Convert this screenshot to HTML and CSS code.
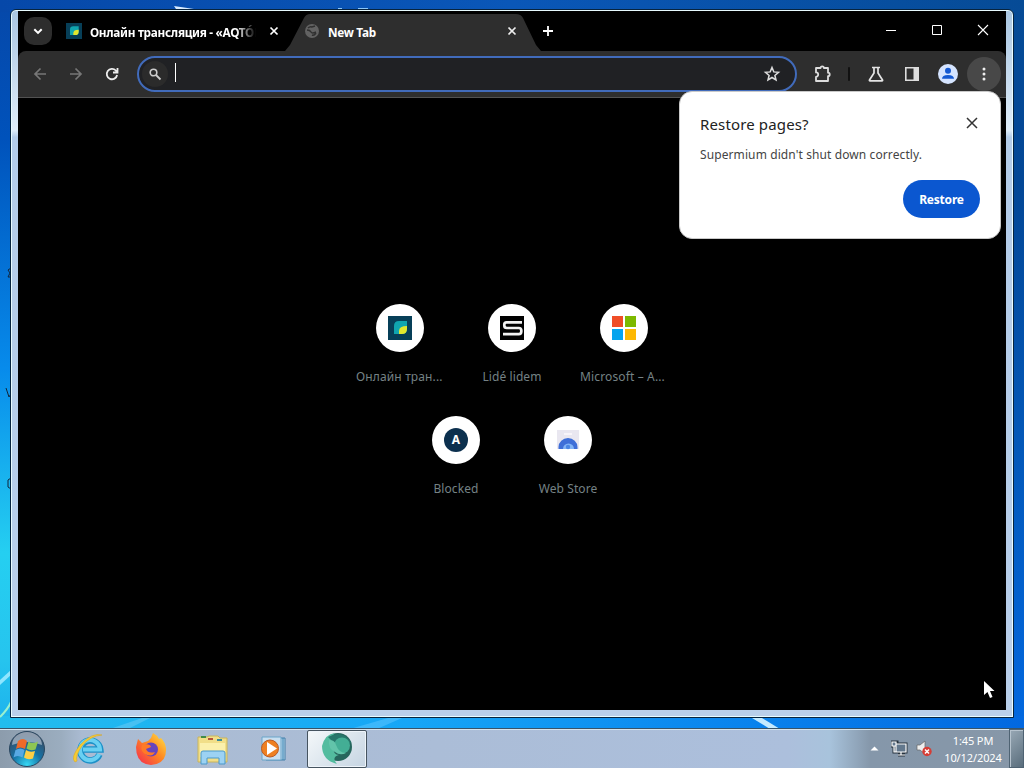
FILE: index.html
```html
<!DOCTYPE html>
<html lang="en">
<head>
<meta charset="utf-8">
<title>New Tab</title>
<link rel="stylesheet" href="styles.css">
</head>
<body>
<div class="desktop">
  <svg class="wallpaper" width="1024" height="768" viewBox="0 0 1024 768">
    <path d="M174 6l20 3 14 3h-30z" fill="#d9ecff"/>
    <path d="M338 8h4v3h-4zM358 8h10v3h-10z" fill="#8cc8fa"/>
    <path d="M0 680L12 669v5L0 685z" fill="#8fe6ff"/>
    <path d="M0 717q8-8 11-15" stroke="#9af0cf" stroke-width="2" fill="none"/>
    <path d="M110 729l32-11h8l-22 11z" fill="#62c8f4" opacity=".6"/>
    <path d="M350 729l38-11h14l-25 11z" fill="#62c8ff" opacity=".5"/>
    <path d="M752 718h10l18 11h-10z" fill="#c4eaff"/>
    <path d="M11 268l-3 2 2 3-2 4h3M6 388l3 9 3-5M11 478l-3 2v7l3 2" fill="none" stroke="#10253a"/>
  </svg>

  <main class="window">
    <header class="tabstrip">
      <button class="tab-search" aria-label="Search tabs"><svg width="12" height="12" viewBox="0 0 12 12"><path d="M2.3 4.200L6 7.900l3.700-3.700" fill="none" stroke="#fff" stroke-width="2"/></svg></button>
      <div class="tab">
        <svg class="favicon" width="16" height="16" viewBox="0 0 24 24"><path fill="#073f58" d="M0 0h24v24H0z"/><path fill="#10a5af" d="M6 10q0-5 5-5h8v8q0 5-5 5H6z"/><path fill="#e2e72d" d="M11 15q0-5 8-5v3q0 5-5 5h-3z"/></svg>
        <span class="tab-title fade">Онлайн трансляция - «AQTÓB</span>
        <svg class="tab-close" width="14" height="14" viewBox="0 0 14 14"><path d="M3.500 3.500l7 7m0-7l-7 7" stroke="#fff" stroke-width="1.700"/></svg>
      </div>
      <div class="tab active">
        <svg class="tab-shape" width="256" height="37" viewBox="0 0 256 37"><path d="M0 37L5 31 19 4q2-4 6-4h206q5 0 7 4l13 27 5 6z" fill="#2e2e2e"/></svg>
        <svg class="favicon" width="16" height="16" viewBox="0 0 16 16"><circle cx="8" cy="8" r="7" fill="#626262"/><path d="M4 5q2-2 4-1l3-1M3 7q3 0 4 2t5 0M8 12q2 1 4-2" fill="none" stroke="#303030" stroke-width="1.500"/></svg>
        <span class="tab-title">New Tab</span>
        <svg class="tab-close" width="14" height="14" viewBox="0 0 14 14"><path d="M3.500 3.500l7 7m0-7l-7 7" stroke="#eee" stroke-width="1.700"/></svg>
      </div>
      <svg class="new-tab" width="14" height="14" viewBox="0 0 14 14"><path d="M7 2v10M2 7h10" stroke="#fff" stroke-width="1.800"/></svg>
      <div class="controls">
        <span><svg width="12" height="12" viewBox="0 0 12 12"><path d="M1 6.500h10" stroke="#fff"/></svg></span>
        <span><svg width="12" height="12" viewBox="0 0 12 12"><path d="M1.500 1.500h9v9h-9z" fill="none" stroke="#fff"/></svg></span>
        <span><svg width="12" height="12" viewBox="0 0 12 12"><path d="M1 1l10 10M11 1L1 11" stroke="#fff" stroke-width="1.100"/></svg></span>
      </div>
    </header>

    <nav class="toolbar">
      <span class="tool"><svg width="16" height="16" viewBox="0 0 16 16"><path d="M14 8H3m5.500-5.500L3 8l5.500 5.500" fill="none" stroke="#777" stroke-width="1.700"/></svg></span>
      <span class="tool"><svg width="16" height="16" viewBox="0 0 16 16"><path d="M2 8h11M7.500 2.500L13 8l-5.500 5.500" fill="none" stroke="#777" stroke-width="1.700"/></svg></span>
      <span class="tool"><svg width="16" height="16" viewBox="0 0 16 16"><path d="M13.100 9A5.200 5.200 0 1 1 11.800 4.500L13 5.800M13.500 2v4.500H9" fill="none" stroke="#eee" stroke-width="1.800"/></svg></span>
      <div class="omnibox">
        <span class="search-badge"><svg width="14" height="14" viewBox="0 0 14 14"><circle cx="5.500" cy="5.500" r="3.300" fill="none" stroke="#ccc" stroke-width="1.600"/><path d="M8 8l4.500 4.500" stroke="#ccc" stroke-width="1.800"/></svg></span>
        <i class="caret"></i>
        <svg class="star" width="18" height="18" viewBox="0 0 18 18"><path d="M9 2.500l1.800 4.400 4.700.4-3.600 3.100 1.100 4.600L9 12.500 5 15l1.100-4.600-3.600-3.100 4.700-.4z" fill="none" stroke="#ddd" stroke-width="1.500"/></svg>
      </div>
      <span class="tool ext"><svg width="20" height="20" viewBox="0 0 20 20"><path d="M4 4h4.500a1.700 1.700 0 0 1 3.400 0H16v4.700a1.700 1.700 0 0 1 0 3.400V17H4v-4.200a2.200 2.200 0 0 0 0-4.400z" fill="none" stroke="#ddd" stroke-width="1.800" stroke-linejoin="round"/></svg></span>
      <i class="divider"></i>
      <span class="tool"><svg width="18" height="18" viewBox="0 0 18 18"><path d="M5 2.500h8M7 3v5l-4.500 7q-.4.800.500.800h12q.9 0 .5-.8L11 8V3" fill="none" stroke="#e4e4e4" stroke-width="1.700"/></svg></span>
      <span class="tool"><svg width="16" height="16" viewBox="0 0 16 16"><path d="M1.800 1.800h12.400v12.400H1.800z" fill="none" stroke="#ddd" stroke-width="1.600"/><path d="M9.500 2H15v12H9.500z" fill="#ddd"/></svg></span>
      <span class="tool"><svg width="20" height="20" viewBox="0 0 20 20"><circle cx="10" cy="10" r="10" fill="#d5e4ff"/><circle cx="10" cy="6.700" r="3" fill="#1459d2"/><path d="M4 14.800q0-3.800 6-3.800t6 3.800z" fill="#1459d2"/></svg></span>
      <span class="tool menu"><svg width="4" height="16" viewBox="0 0 4 16" fill="#eee"><circle cx="2" cy="3" r="1.500"/><circle cx="2" cy="8" r="1.500"/><circle cx="2" cy="13" r="1.500"/></svg></span>
    </nav>

    <section class="page">
      <div class="shortcuts">
        <a class="shortcut"><span class="disc"><svg width="24" height="24" viewBox="0 0 24 24"><path fill="#073f58" d="M0 0h24v24H0z"/><path fill="#10a5af" d="M6 10q0-5 5-5h8v8q0 5-5 5H6z"/><path fill="#e2e72d" d="M11 15q0-5 8-5v3q0 5-5 5h-3z"/></svg></span><span class="label wide">Онлайн тран...</span></a>
        <a class="shortcut"><span class="disc"><svg width="24" height="24" viewBox="0 0 24 24"><path d="M0 0h24v24H0z"/><path d="M22 6.300H6.500Q4.300 6.300 4.300 8.500v1q0 2.500 2.500 2.500h12q2.500 0 2.500 2.500v1q0 2.700-2.500 2.700H3" fill="none" stroke="#f2f2f2" stroke-width="2.700"/></svg></span><span class="label">Lidé lidem</span></a>
        <a class="shortcut"><span class="disc"><svg width="24" height="24" viewBox="0 0 24 24"><path fill="#f04e27" d="M0 0h11v11H0z"/><path fill="#7db900" d="M13 0h11v11H13z"/><path fill="#05a4ee" d="M0 13h11v11H0z"/><path fill="#fdb802" d="M13 13h11v11H13z"/></svg></span><span class="label wide">Microsoft – A...</span></a>
        <a class="shortcut"><span class="disc"><span class="letter">A</span></span><span class="label">Blocked</span></a>
        <a class="shortcut"><span class="disc"><svg width="24" height="24" viewBox="0 0 24 24"><path fill="#e9e7f0" d="M1 2h22v19H1z"/><path fill="#f8f5fa" d="M8 5h8v2H8z"/><path fill="#3f6fd8" d="M2.500 21v-2a9.500 9 0 0 1 19 0v2z"/><path fill="#83b4f6" d="M7 21a5.500 5.500 0 0 1 11 0z"/><circle cx="12" cy="19" r="2.200" fill="#4b86e4"/></svg></span><span class="label">Web Store</span></a>
      </div>
    </section>
  </main>

  <aside class="bubble">
    <div class="bubble-head"><h1>Restore pages?</h1><svg width="16" height="16" viewBox="0 0 16 16"><path d="M3 3l10 10M13 3L3 13" stroke="#333" stroke-width="1.500"/></svg></div>
    <p>Supermium didn't shut down correctly.</p>
    <button class="restore">Restore</button>
  </aside>

  <svg class="pointer" width="14" height="20" viewBox="0 0 14 20"><path d="M1 1v14l3.500-3 2.500 6 2.500-1L7 11h4.500z" fill="#fff"/></svg>

  <footer class="taskbar">
    <span class="start"><svg width="38" height="38" viewBox="0 0 38 38"><defs><radialGradient id="orb" cx=".5" cy=".95" r=".85"><stop stop-color="#36d8f4"/><stop offset=".5" stop-color="#1571a4"/><stop offset="1" stop-color="#394d66"/></radialGradient></defs><circle cx="19" cy="19" r="17.500" fill="url(#orb)" stroke="#29465f"/><path d="M4 15a15 13 0 0 1 30 0q-15-6-30 0z" fill="#e6eef6" opacity=".5"/><path d="M10 11q5-4 9 0l-2 8q-5-3-9 0z" fill="#ee6a29"/><path d="M20.500 11.500q4 3 9.500 0l-2.500 8q-5 2-9-1z" fill="#8dc653"/><path d="M7.500 20q5-3 9 0l-2 7.500q-5-3-9 0z" fill="#58a9e3"/><path d="M18 20q4 3 9 1l-2 7.500q-5 2-9-1z" fill="#fecf45"/></svg></span>
    <span class="task ie"><svg width="34" height="34" viewBox="0 0 34 34"><path d="M28.500 22.500a10 10 0 1 1 .8-5H12" fill="none" stroke="#1d91c8" stroke-width="6.500"/><path d="M28.200 22a10 10 0 1 1 .8-4.500H12" fill="none" stroke="#69d0f2" stroke-width="4.200"/><path d="M4 30Q-1 26 9 13 21 0 31 3 19 4 11 14 4 24 6 29z" fill="#f7cc32" stroke="#d8a219" stroke-width=".5"/></svg></span>
    <span class="task"><svg width="34" height="34" viewBox="0 0 34 34"><defs><linearGradient id="fox" x1="1" y1="0" x2="0" y2="1"><stop stop-color="#ffe94d"/><stop offset=".45" stop-color="#ff8a20"/><stop offset="1" stop-color="#f32453"/></linearGradient></defs><path d="M2 15l2-8 4 4 6-2 3-3 2-5q4 2 6 6l2-1q4 4 5 10 1 16-15 17Q2 32 2 15z" fill="url(#fox)"/><circle cx="17" cy="17.500" r="7" fill="#6745bd"/><path d="M8 13q8-2 9 2l-5 2q2 5 9 3-3 6-10 2-5-3-3-9z" fill="#ff7a26"/></svg></span>
    <span class="task folder"><svg width="34" height="34" viewBox="0 0 34 34"><path d="M2 5h9l2-1h9l2 2h7v24H2z" fill="#f1de88" stroke="#c8b45c"/><path d="M4 11h25v14H4z" fill="#fbf0ac"/><path d="M5 5h5" stroke="#418b48" stroke-width="2"/><path d="M12 7h5" stroke="#b6543c" stroke-width="2"/><path d="M21 8h5" stroke="#3b8b98" stroke-width="2"/><path d="M5 32V21q0-2 2-2h20q2 0 2 2v11h-6v-6H11v6z" fill="#9cd2f3" stroke="#4b99ca"/></svg></span>
    <span class="task"><svg width="34" height="34" viewBox="0 0 34 34"><path d="M10 6h19v22H10z" fill="#b6d5ea" stroke="#427ea9"/><path d="M6 5h19v23H6z" fill="#c9dff0" stroke="#6ba5c9"/><path d="M27 6v22" stroke="#3781b0"/><circle cx="14" cy="16.500" r="8.500" fill="#ee8022" stroke="#bc5a22"/><path d="M11 10v13l10-6.500z" fill="#fff"/></svg></span>
    <span class="task running"><svg width="34" height="34" viewBox="0 0 34 34"><circle cx="18" cy="15" r="14" fill="#26665d"/><path d="M17 32Q2 28 2 14 5 2 15 1q-6 6-2 13 0 9 6 9-8 2-2 9z" fill="#53bc9f"/><path d="M8 5q14-8 23 5-4 9-15 3z" fill="#26776b"/><circle cx="22" cy="13.500" r="8" fill="#43ae95"/><path d="M9 8q6 0 7 5 3 8 10 8-6 3-11-1Q8 17 9 8z" fill="#62c4aa"/></svg></span>
    <div class="tray">
      <svg width="9" height="5" viewBox="0 0 9 5"><path d="M.5 4.500l4-4 4 4z" fill="#fff"/></svg>
      <svg class="network" width="17" height="17" viewBox="0 0 17 17"><path d="M5 4h10v8H5zM10 12v3M7 15h7M1 2h5v4H1zM3 6v6h2" fill="#63788d" stroke="#26333e" stroke-width="3"/><path d="M5 4h10v8H5zM10 12v3M7 15h7M1 2h4v4H1zM3 6v6h2" fill="#63788d" stroke="#fff" stroke-width="1.200"/></svg>
      <svg class="sound" width="16" height="17" viewBox="0 0 16 17"><path d="M1 5h3l5-4v13l-5-4H1z" fill="#eee" stroke="#666" stroke-width=".7"/><circle cx="11" cy="11.500" r="4.700" fill="#d63d35"/><path d="M9 9.500l4 4m0-4l-4 4" stroke="#fff" stroke-width="1.500"/></svg>
      <div class="clock"><span class="time">1:45 PM</span><span class="date">10/12/2024</span></div>
      <i class="show-desktop"></i>
    </div>
  </footer>
</div>
</body>
</html>
```

FILE: styles.css
```css
* { box-sizing: border-box; }
body { margin: 0; font-family: "Noto Sans", "Open Sans", sans-serif; }
button { border: 0; padding: 0; font: inherit; }
svg { display: block; flex: none; }
.desktop {
  position: relative; width: 1024px; height: 768px; overflow: hidden;
  display: flex; flex-direction: column; justify-content: flex-end;
  background:
    linear-gradient(90deg, #0648a9, #0a57b8 50%, #064b96) 0 0 / 100% 12px no-repeat,
    linear-gradient(90deg, #22bdee, #16a6f6 40%, #0a86ee 70%, #0268e0) 0 716px / 100% 14px no-repeat,
    linear-gradient(#064b96, #034796 25%, #0458b8 60%, #0268e0) 100% 0 / 20px 730px no-repeat,
    linear-gradient(#0648a9 0, #0052bb 18%, #078beb 48%, #25cff1 72%, #26c4ee 86%, #16a5ec 100%);
}
.wallpaper { position: absolute; left: 0; top: 0; }

.window {
  position: absolute; left: 10px; top: 9px; width: 1004px; height: 709px;
  display: flex; flex-direction: column; padding: 1px 7px 7px;
  border: 1px solid #07243f; border-radius: 6px 6px 0 0;
  background: linear-gradient(#a9c6e2 0, #dfedf9 17%, #b3cce9 18%, #b9cfea 100%);
  box-shadow: inset 0 0 0 1px #e8fbff;
}
.tabstrip { position: relative; z-index: 1; height: 40px; display: flex; align-items: center; flex: none; background: #000; color: #fff; }
.tab-search { width: 28px; height: 28px; margin-left: 6px; border-radius: 10px; background: #2d2d2d; display: grid; place-items: center; }
.tab { height: 40px; width: 233px; padding: 0 0 0 14px; display: flex; align-items: center; gap: 8px; }
.tab-title { font-size: 11.8px; font-weight: 700; line-height: 18px; padding-top: 1px; white-space: nowrap; width: 166px; letter-spacing: -.3px; }
.tab-title.fade { -webkit-mask-image: linear-gradient(90deg, #000 88%, transparent); mask-image: linear-gradient(90deg, #000 88%, transparent); }
.tab-close { margin-left: 3px; }
.tab.active { position: relative; width: 256px; padding-left: 19px; }
.tab.active .favicon, .tab.active .tab-title, .tab.active .tab-close { position: relative; z-index: 1; }
.tab-shape { position: absolute; left: 0; bottom: 0; }
.controls { margin-left: auto; height: 40px; padding-bottom: 2px; display: flex; align-items: center; }
.controls span { width: 46px; display: grid; place-items: center; }

.toolbar { height: 47px; padding: 0 4px; flex: none; display: flex; align-items: center; background: #2e2e2e; border-bottom: 1px solid #525252; border-radius: 8px 8px 0 0; box-shadow: 0 -8px #000; }
.tool { width: 36px; height: 36px; display: grid; place-items: center; flex: none; }
.omnibox { margin: 0 7px; flex: 1; height: 36px; border: 2px solid #416bbb; border-radius: 18px; background: #202124; display: flex; align-items: center; padding: 0 14px 0 3px; }
.search-badge { width: 26px; height: 26px; border-radius: 50%; background: #2b2b2b; display: grid; place-items: center; }
.caret { width: 1px; height: 19px; margin: 0 0 3px 7px; background: #fff; }
.star { margin-left: auto; }
.divider { width: 2px; height: 14px; margin: 0 8px; background: #111; border-radius: 1px; }
.menu { width: 34px; height: 34px; margin: 0 1px; border-radius: 50%; background: #484848; }

.page { flex: 1; background: #000; display: flex; justify-content: center; align-items: flex-start; padding-top: 206px; }
.shortcuts { width: 336px; display: flex; flex-wrap: wrap; justify-content: center; }
.shortcut { width: 112px; height: 112px; display: flex; flex-direction: column; align-items: center; gap: 16px; }
.disc { width: 48px; height: 48px; border-radius: 50%; background: #fff; display: grid; place-items: center; }
.letter { width: 24px; height: 24px; border-radius: 50%; background: #0c304e; color: #fff; font-size: 12px; line-height: 24px; font-weight: 700; text-align: center; }
.label { color: #758285; font-size: 12px; line-height: 18px; letter-spacing: .08px; white-space: nowrap; }
.label.wide { width: 88px; letter-spacing: .14px; }

.bubble { position: absolute; left: 679px; top: 91px; width: 322px; height: 148px; padding: 23px 20px 20px; border-radius: 13px; background: #fff; border: 1px solid #c9c9c9; display: flex; flex-direction: column; }
.bubble-head { display: flex; justify-content: space-between; align-items: flex-start; height: 20px; }
h1 { margin: 0; font-size: 15px; line-height: 18px; font-weight: 400; letter-spacing: .14px; color: #222; }
.bubble p { margin: 12px 0 0; font-size: 12px; line-height: 18px; letter-spacing: .1px; color: #444; white-space: nowrap; }
.restore { width: 77px; height: 38px; align-self: flex-end; margin-top: 16px; flex: none; border-radius: 19px; background: #0b57d0; color: #fff; font-size: 12px; font-weight: 700; letter-spacing: -.2px; }
.pointer { position: absolute; left: 983px; top: 680px; }

.taskbar { position: relative; height: 40px; display: flex; align-items: center; border-top: 1px solid #385469; box-shadow: inset 0 1px #d4e4ef; background: linear-gradient(90deg, #8c9cac 0, #9badbf 6%, #aabbd2 8%, #acbfdc 77%, #a8c3dc 81%, #8597aa 85%, #8797a8 100%); }
.start { width: 59px; padding-left: 8px; }
.task { width: 61px; height: 38px; display: grid; place-items: center; }
.ie { padding-right: 3px; }
.folder { padding-left: 3px; }
.running { width: 60px; margin-left: 4px; border: 1px solid #465460; border-radius: 2px; background: linear-gradient(135deg, #f4f8fa, #c5d4e2); box-shadow: inset 0 0 0 1px #eef4fa; }
.tray { margin-left: auto; height: 39px; display: flex; align-items: center; }
.network { margin-left: 12px; }
.sound { margin-left: 8px; }
.clock { width: 72px; margin-left: 5px; display: flex; flex-direction: column; align-items: center; color: #fff; font-size: 11px; line-height: 17px; letter-spacing: -.1px; }
.show-desktop { width: 15px; height: 39px; border: 1px solid #4f6373; background: linear-gradient(135deg, #98a8b5, #596d7c); box-shadow: inset 1px 1px #b5c2cd; }
```
